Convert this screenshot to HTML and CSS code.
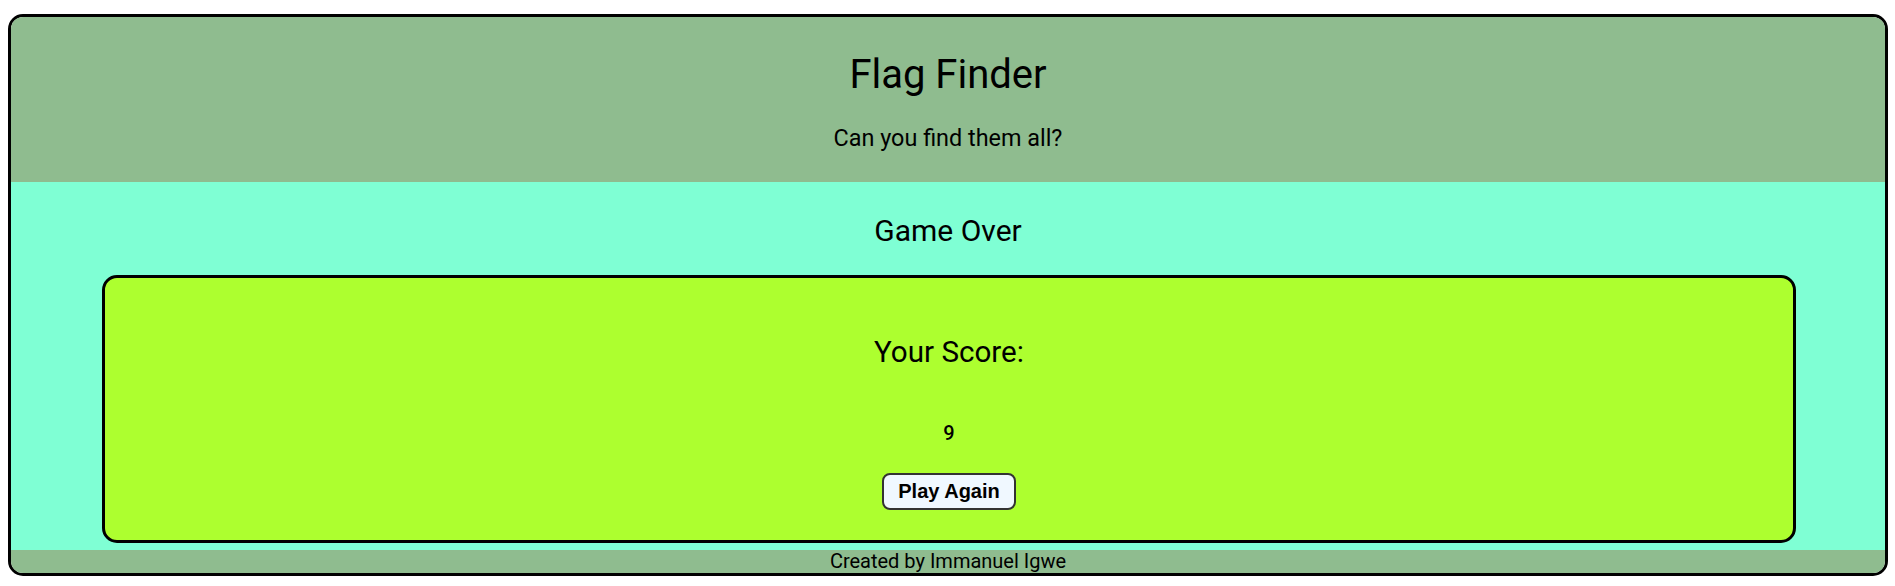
FILE: index.html
```html
<!DOCTYPE html>
<html lang="en">
<head>
<meta charset="utf-8">
<title>Flag Finder</title>
<link rel="stylesheet" href="styles.css">
</head>
<body>
<div class="app">
  <header class="header">
    <h1 class="title">Flag Finder</h1>
    <p class="tagline">Can you find them all?</p>
  </header>
  <main class="main">
    <h2 class="status">Game Over</h2>
    <section class="card">
      <h3 class="score-label">Your Score:</h3>
      <p class="score">9</p>
      <button class="btn">Play Again</button>
    </section>
  </main>
  <footer class="footer">Created by Immanuel Igwe</footer>
</div>
</body>
</html>
```
FILE: styles.css
```css
html, body {
  margin: 0;
  padding: 0;
  background: #ffffff;
}
body {
  padding: 14px 7px 9px 8px;
  font-family: Roboto, "Liberation Sans", sans-serif;
  color: #000;
}
.app {
  border: 3px solid #000;
  border-radius: 15px;
  overflow: hidden;
  display: flex;
  flex-direction: column;
}
.header {
  background: #8fbc8f;
  display: flex;
  flex-direction: column;
  align-items: center;
  padding: 34px 0 29px;
}
.title {
  margin: 0;
  font-size: 40px;
  font-weight: 400;
  line-height: 48px;
}
.tagline {
  margin: 24px 0 0;
  font-size: 23.4px;
  line-height: 30px;
}
.main {
  background: #7fffd4;
  display: flex;
  flex-direction: column;
  align-items: stretch;
  padding: 31px 0 7px;
}
.status {
  margin: 0;
  text-align: center;
  font-size: 30px;
  font-weight: 400;
  line-height: 36px;
}
.card {
  margin: 26px 89px 0 91px;
  background: #adff2f;
  border: 3px solid #000;
  border-radius: 15px;
  display: flex;
  flex-direction: column;
  align-items: center;
  padding: 57px 0 30px;
}
.score-label {
  margin: 0;
  font-size: 29.6px;
  font-weight: 400;
  line-height: 34px;
}
.score {
  margin: 52px 0 0;
  font-size: 20px;
  font-weight: 500;
  line-height: 24px;
}
.btn {
  margin-top: 28px;
  height: 37px;
  padding: 0 14px;
  background: #f0f8ff;
  border: 2px solid #333;
  border-radius: 8px;
  font-family: "Liberation Sans", Arial, sans-serif;
  font-weight: 700;
  font-size: 20px;
  color: #000;
}
.footer {
  background: #8fbc8f;
  text-align: center;
  font-size: 20px;
  line-height: 23px;
}
```
